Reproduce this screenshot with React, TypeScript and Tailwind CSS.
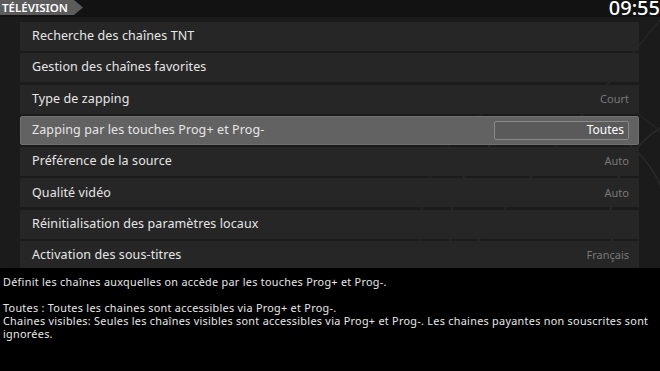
import React from 'react';

const rows = [
  { label: 'Recherche des chaînes TNT', value: '' },
  { label: 'Gestion des chaînes favorites', value: '' },
  { label: 'Type de zapping', value: 'Court' },
  { label: 'Zapping par les touches Prog+ et Prog-', value: 'Toutes', selected: true },
  { label: 'Préférence de la source', value: 'Auto' },
  { label: 'Qualité vidéo', value: 'Auto' },
  { label: 'Réinitialisation des paramètres locaux', value: '' },
  { label: 'Activation des sous-titres', value: 'Français' },
];

export default function App() {
  return (
    <div
      className="relative w-[660px] h-[371px] overflow-hidden bg-[#1b1b1b] flex flex-col"
      style={{ fontFamily: '"Noto Sans", Lato, sans-serif' }}
    >
      {/* fond décoratif */}
      <svg className="absolute inset-0 pointer-events-none" width="660" height="371">
        <circle cx="560" cy="230" r="110" fill="none" stroke="#2a2a2a" strokeWidth="1.5" />
        <circle cx="560" cy="230" r="140" fill="none" stroke="#252525" strokeWidth="1.5" />
        <circle cx="720" cy="220" r="110" fill="none" stroke="#2c2c2c" strokeWidth="1.5" />
        <path d="M430 300 L660 20" stroke="#262626" strokeWidth="1.5" />
      </svg>

      {/* en-tête */}
      <div className="relative h-[17px] bg-[#121212] flex items-start justify-between shrink-0">
        <div className="flex h-[15px]">
          <div className="bg-[#5b5b5b] h-[15px] pl-[2px] pr-[6px] flex items-center text-white text-[11.5px] font-semibold leading-none">
            TÉLÉVISION
          </div>
          <svg width="9" height="15" className="block">
            <polygon points="0,0 9,7.5 0,15" fill="#5b5b5b" />
          </svg>
        </div>
        <div className="text-white text-[20px] font-medium leading-[20px] -mt-[2px]">09:55</div>
      </div>

      {/* liste */}
      <div className="relative flex-1 overflow-hidden pt-[5px] pl-[20px] pr-[21px] flex flex-col gap-[2.3px]">
        {rows.map((r) => (
          <div
            key={r.label}
            className={
              r.selected
                ? 'h-[29px] shrink-0 rounded-[2px] bg-[#626262] flex items-center justify-between pl-[11px] pr-[9px] border border-[#707070]'
                : 'h-[29px] shrink-0 bg-[#262626] flex items-center justify-between pl-[12px] pr-[10px]'
            }
          >
            <span className="text-[12.5px] tracking-[0.1px] text-[#e6e6e6]">{r.label}</span>
            {r.selected ? (
              <span className="w-[135px] h-[19px] border border-[#8a8a8a] rounded-[2px] bg-[#5a5a5a] flex items-center justify-end pr-[4px] text-[12px] text-white">
                {r.value}
              </span>
            ) : (
              <span className="text-[11px] text-[#787878]">{r.value}</span>
            )}
          </div>
        ))}
      </div>

      {/* description */}
      <div className="relative h-[103px] shrink-0 bg-black px-[3px] pt-[7px] text-[10.8px] leading-[13px] tracking-[0.3px] text-[#e8e8e8]">
        <p>Définit les chaînes auxquelles on accède par les touches Prog+ et Prog-.</p>
        <p className="mt-[13px]">Toutes : Toutes les chaines sont accessibles via Prog+ et Prog-.</p>
        <p>
          Chaines visibles: Seules les chaînes visibles sont accessibles via Prog+ et Prog-. Les chaines payantes non souscrites sont ignorées.
        </p>
      </div>
    </div>
  );
}
